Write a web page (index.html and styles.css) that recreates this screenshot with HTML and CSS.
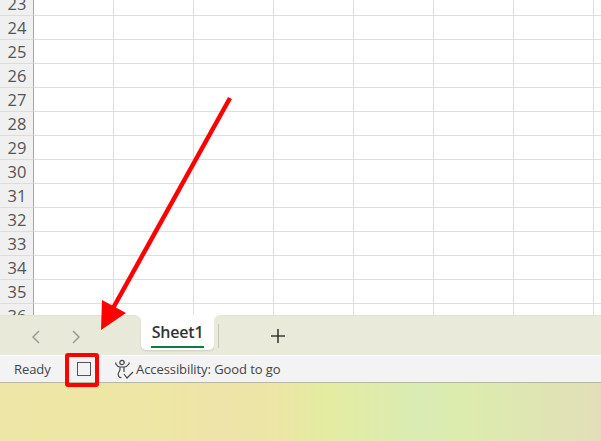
FILE: index.html
```html
<!DOCTYPE html>
<html lang="en">
<head>
    <meta charset="UTF-8">
    <meta name="viewport" content="width=device-width, initial-scale=1.0">
    <title>Sheet1</title>
    <link rel="stylesheet" href="styles.css">
</head>
<body>
    <div class="window">
        <div class="grid">
            <div class="row first"><div class="row-head">23</div><div class="cells"></div></div>
            <div class="row"><div class="row-head">24</div><div class="cells"></div></div>
            <div class="row"><div class="row-head">25</div><div class="cells"></div></div>
            <div class="row"><div class="row-head">26</div><div class="cells"></div></div>
            <div class="row"><div class="row-head">27</div><div class="cells"></div></div>
            <div class="row"><div class="row-head">28</div><div class="cells"></div></div>
            <div class="row"><div class="row-head">29</div><div class="cells"></div></div>
            <div class="row"><div class="row-head">30</div><div class="cells"></div></div>
            <div class="row"><div class="row-head">31</div><div class="cells"></div></div>
            <div class="row"><div class="row-head">32</div><div class="cells"></div></div>
            <div class="row"><div class="row-head">33</div><div class="cells"></div></div>
            <div class="row"><div class="row-head">34</div><div class="cells"></div></div>
            <div class="row"><div class="row-head">35</div><div class="cells"></div></div>
            <div class="row"><div class="row-head">36</div><div class="cells"></div></div>
        </div>

        <div class="tab-bar">
            <div class="tab-nav">
                <svg class="chevron" width="10" height="16" viewBox="0 0 10 16"><path d="M8 2 L2 8 L8 14" /></svg>
                <svg class="chevron" width="10" height="16" viewBox="0 0 10 16"><path d="M2 2 L8 8 L2 14" /></svg>
            </div>
            <div class="tab-slot">
                <div class="tab"><span class="tab-name">Sheet1</span></div>
            </div>
            <div class="tab-rest">
                <span class="tab-sep"></span>
                <svg class="plus" width="16" height="16" viewBox="0 0 16 16"><path d="M8 1 V15 M1 8 H15" /></svg>
            </div>
        </div>

        <div class="status-bar">
            <span class="ready">Ready</span>
            <div class="macro">
                <span class="macro-check"></span>
                <span class="macro-mark"></span>
            </div>
            <svg class="a11y-icon" width="20" height="20" viewBox="0 0 20 20">
                <circle cx="7" cy="3.5" r="2.2" />
                <path d="M0.8 3.5 L0.8 5 C2 7 3.5 8 5 8 H9 C10.5 8 12.5 7 14 5 L14 3.5 M5 8 C5.5 10.5 5 12 3.5 14 C2.5 16 4 19 6.5 18.5 M9 8 V13 M9 15 L12 19 L18 13" />
            </svg>
            <span class="a11y-text">Accessibility: Good to go</span>
        </div>

        <div class="desktop"></div>

        <svg class="arrow" width="601" height="441" viewBox="0 0 601 441">
            <line x1="230" y1="98" x2="112" y2="310" />
            <polygon points="101,330 102,300 126,313" />
        </svg>
    </div>
</body>
</html>
```

FILE: styles.css
```css
html, body {
    margin: 0;
    height: 100%;
    overflow: hidden;
}

body {
    font-family: "Open Sans", "Noto Sans", sans-serif;
    color: #444;
}

.window {
    position: relative;
    width: 601px;
    height: 441px;
    display: flex;
    flex-direction: column;
    overflow: hidden;
    background: #fff;
}

/* sheet grid */
.grid {
    height: 315px;
    flex: none;
    overflow: hidden;
}

.row {
    display: flex;
    height: 24px;
    box-sizing: border-box;
}

.row.first {
    margin-top: -8px;
}

.row-head {
    width: 33px;
    flex: none;
    box-sizing: border-box;
    padding-left: 1px;
    background: #f0f0f0;
    border-bottom: 1px solid #dcdcdc;
    font-size: 16.5px;
    line-height: 24px;
    text-align: center;
    color: #555;
}

.cells {
    flex: 1;
    border-left: 1px solid #a8a8a8;
    border-bottom: 1px solid #dedede;
    background-image: linear-gradient(to right, transparent 79px, #dedede 79px);
    background-size: 80px 100%;
}

/* sheet tabs */
.tab-bar {
    display: flex;
    height: 40px;
    flex: none;
    background: #fff;
}

.tab-nav {
    width: 141px;
    box-sizing: border-box;
    display: flex;
    align-items: center;
    gap: 30px;
    padding: 3px 0 0 31px;
    background: #e9e9d9;
    border-top-right-radius: 7px;
    border-top: 1px solid #e2e2d2;
}

.chevron path {
    fill: none;
    stroke: #9a9a94;
    stroke-width: 1.5;
}

.tab-slot {
    width: 73px;
    background: #e9e9d9;
}

.tab {
    height: 35px;
    box-sizing: border-box;
    padding-top: 4px;
    background: #fff;
    border-radius: 0 0 5px 5px;
    box-shadow: 0 1px 2px rgba(0, 0, 0, 0.12);
    text-align: center;
}

.tab-name {
    display: inline-block;
    height: 27px;
    padding: 0 1px;
    border-bottom: 2px solid #107c41;
    font-size: 16px;
    font-weight: 600;
    line-height: 26px;
    letter-spacing: -0.2px;
    color: #333;
}

.tab-rest {
    flex: 1;
    display: flex;
    align-items: center;
    padding-top: 1px;
    background: #e9ead9;
    border-top-left-radius: 7px;
    border-top: 1px solid #e2e2d2;
}

.tab-sep {
    width: 1px;
    height: 24px;
    margin-left: 4px;
    margin-top: -1px;
    background: #c6c6b8;
}

.plus {
    margin-left: 51px;
}

.plus path {
    fill: none;
    stroke: #3a3a3a;
    stroke-width: 1.6;
}

/* status bar */
.status-bar {
    height: 28px;
    flex: none;
    box-sizing: border-box;
    display: flex;
    align-items: center;
    background: #f3f3f3;
    border-top: 1px solid #fff;
    border-bottom: 1px solid #b4b8a0;
    font-size: 13px;
    letter-spacing: -0.08px;
}

.ready {
    margin-left: 14px;
    width: 51px;
}

.macro {
    position: relative;
    width: 34px;
    height: 14px;
    box-sizing: border-box;
    padding-left: 4px;
    display: flex;
    justify-content: center;
}

.macro-check {
    width: 14px;
    height: 14px;
    box-sizing: border-box;
    border: 1px solid #555;
}

.macro-mark {
    position: absolute;
    left: 0;
    top: -9px;
    width: 34px;
    height: 34px;
    box-sizing: border-box;
    border: 4px solid #f00;
    border-radius: 3px;
}

.a11y-icon {
    margin-left: 16px;
    margin-right: 1px;
}

.a11y-icon circle,
.a11y-icon path {
    fill: none;
    stroke: #444;
    stroke-width: 1.2;
}

/* desktop wallpaper below the window */
.desktop {
    flex: 1;
    background: linear-gradient(90deg, #ede6a6 0%, #eee6a3 28%, #eee3a9 36%, #ede6a6 46%, #e4eca0 54%, #d9ecb4 70%, #dcecad 77%, #e2dfb8 100%);
}

.arrow {
    position: absolute;
    left: 0;
    top: 0;
}

.arrow line {
    stroke: #f00;
    stroke-width: 4.5;
}

.arrow polygon {
    fill: #f00;
}
```
